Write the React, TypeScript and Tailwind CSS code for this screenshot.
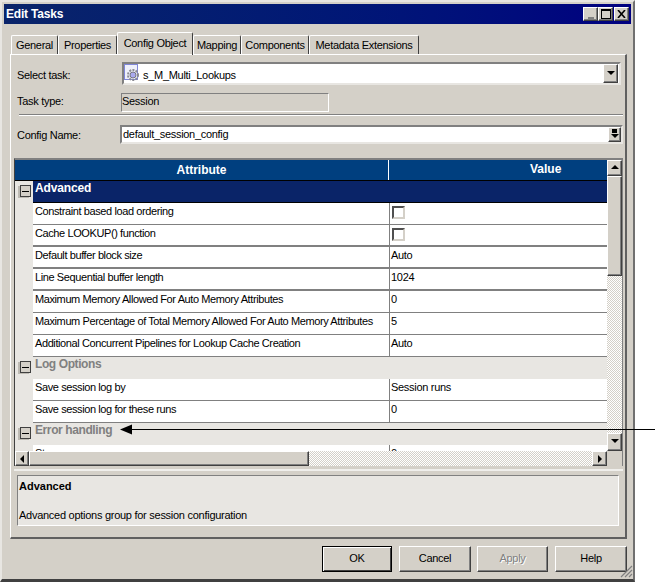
const raised = 'border border-t-white border-l-white border-r-[#404040] border-b-[#404040] bg-[#d4d0c8] shadow-[inset_-1px_-1px_0_#808080]';
const sunken = 'border-2 border-t-[#808080] border-l-[#808080] border-r-[#e8e6e2] border-b-[#e8e6e2] bg-white';
const dither = 'bg-[repeating-conic-gradient(#d4d0c8_0_25%,#ffffff_0_50%)] bg-[length:2px_2px]';

const tabs = [
  { label: 'General', w: 'w-[47px]' },
  { label: 'Properties', w: 'w-[59px]' },
  { label: 'Config Object', w: 'w-[76px]', active: true },
  { label: 'Mapping', w: 'w-[48px]' },
  { label: 'Components', w: 'w-[68px]' },
  { label: 'Metadata Extensions', w: 'w-[110px]' },
];

type Row =
  | { group: string; selected?: boolean }
  | { name: string; value?: string; check?: boolean; thick?: boolean };

const rows: Row[] = [
  { group: 'Advanced', selected: true },
  { name: 'Constraint based load ordering', check: true },
  { name: 'Cache LOOKUP() function', check: true, thick: true },
  { name: 'Default buffer block size', value: 'Auto', thick: true },
  { name: 'Line Sequential buffer length', value: '1024', thick: true },
  { name: 'Maximum Memory Allowed For Auto Memory Attributes', value: '0' },
  { name: 'Maximum Percentage of Total Memory Allowed For Auto Memory Attributes', value: '5' },
  { name: 'Additional Concurrent Pipelines for Lookup Cache Creation', value: 'Auto' },
  { group: 'Log Options' },
  { name: 'Save session log by', value: 'Session runs' },
  { name: 'Save session log for these runs', value: '0' },
  { group: 'Error handling' },
  { name: 'Stop on errors', value: '0' },
];

function Arrow({ dir }: { dir: 'up' | 'down' | 'left' | 'right' }) {
  const points = {
    up: '0,5 8,5 4,1',
    down: '0,1 8,1 4,5',
    left: '6,0 6,8 2,4',
    right: '2,0 2,8 6,4',
  }[dir];
  return (
    <svg width="8" height="8" viewBox="0 0 8 8" className="block">
      <polygon points={points} fill="#000" />
    </svg>
  );
}

function MinusBox() {
  return (
    <div className="h-[22px] w-[18px] shrink-0 bg-[#e8e6e2] pt-[4px] pl-[5px]">
      <div className="flex h-[12px] w-[11px] items-center justify-center border border-[#404040] bg-[#d4d0c8] shadow-[-2px_1px_0_#bdbab3]">
        <div className="h-px w-[7px] bg-black" />
      </div>
    </div>
  );
}

function GridRow({ row }: { row: Row }) {
  if ('group' in row) {
    return (
      <div className="flex h-[22px]">
        <MinusBox />
        <div
          className={
            row.selected
              ? 'flex-1 border-b border-black bg-[#0a2468] pl-[2px] text-[12px] leading-[14px] font-bold tracking-[-0.15px] text-white'
              : 'flex-1 bg-[#e8e6e2] pl-[2px] text-[12px] leading-[14px] font-bold tracking-[-0.4px] text-[#808080]'
          }
        >
          {row.group}
        </div>
      </div>
    );
  }
  return (
    <div className="flex h-[22px]">
      <div className="w-[18px] shrink-0 bg-[#e8e6e2]" />
      <div
        className={`flex flex-1 bg-white ${row.thick ? 'border-b-2 border-[#808080]' : 'border-b border-[#808080]'}`}
      >
        <div className="w-[356px] shrink-0 pl-[2px] leading-[16px] tracking-[-0.4px] whitespace-nowrap text-black">{row.name}</div>
        <div className="flex-1 border-l border-[#808080] pl-[1px] leading-[16px] tracking-[-0.3px] text-black">
          {row.check ? (
            <div className="mt-[3px] ml-[1px] h-[13px] w-[13px] border-2 border-t-[#505050] border-l-[#505050] border-r-[#d4d0c8] border-b-[#d4d0c8] bg-white" />
          ) : (
            row.value
          )}
        </div>
      </div>
    </div>
  );
}

function GearIcon() {
  return (
    <svg width="17" height="19" viewBox="0 0 17 19" className="shrink-0">
      <rect x="0.5" y="0.5" width="13" height="15" fill="#eef0fb" stroke="#7f86d8" />
      <g fill="none" stroke="#8a8a92">
        <circle cx="9" cy="11" r="5" strokeWidth="2" strokeDasharray="2 1.2" />
      </g>
      <circle cx="9" cy="11" r="3" fill="#a9a9ee" stroke="#77777f" />
    </svg>
  );
}

export default function App() {
  return (
    <div className="relative h-[582px] w-[655px] bg-white font-['Liberation_Sans',Arial,sans-serif] text-[11px] tracking-[-0.3px] text-black">
      <div className="flex h-[582px] w-[635px] flex-col border-t-2 border-r-2 border-b-[3px] border-l-2 border-t-[#e8e6e2] border-r-[#707070] border-b-[#404040] border-l-[#e8e6e2] bg-[#d4d0c8] px-[2px] pt-[2px]">
        {/* title bar */}
        <div className="flex h-[20px] items-center justify-between bg-linear-to-r from-[#0a246a] to-[#000080] pr-[2px] pl-[2px]">
          <span className="text-[12px] font-bold tracking-[-0.2px] text-white">Edit Tasks</span>
          <div className="flex">
            <div className={`${raised} flex h-[14px] w-[15px] items-end justify-center pb-[1px]`}>
              <div className="h-[2px] w-[6px] bg-[#808080]" />
            </div>
            <div className={`${raised} flex h-[14px] w-[15px] items-center justify-center`}>
              <div className="h-[10px] w-[10px] border border-t-2 border-black" />
            </div>
            <div className={`${raised} ml-[1px] flex h-[14px] w-[15px] items-center justify-center`}>
              <svg width="9" height="8" viewBox="0 0 9 8">
                <path d="M1 0 L8 8 M8 0 L1 8" stroke="#000" strokeWidth="1.6" />
              </svg>
            </div>
          </div>
        </div>

        {/* tabs */}
        <div className="mt-[8px] flex h-[22px] items-end pl-[7px]">
          {tabs.map((t) => (
            <div
              key={t.label}
              className={`${t.w} flex shrink-0 justify-center rounded-t-[2px] border-t border-r border-l border-t-white border-r-[#404040] border-l-white ${
                t.active ? 'relative z-10 -mb-px h-[23px] pt-[3px]' : 'h-[19px] pt-[2px]'
              }`}
            >
              <span className="leading-[15px] whitespace-nowrap">{t.label}</span>
            </div>
          ))}
        </div>

        {/* tab panel */}
        <div className="mr-[4px] ml-[6px] flex h-[485px] flex-col border-t border-r-2 border-b-2 border-l border-t-white border-r-[#606060] border-b-[#606060] border-l-white pt-[7px] pr-[2px] pl-[3px]">
          <div className="flex h-[23px] items-center pr-[2px] pl-[3px]">
            <span className="w-[105px] shrink-0 pt-[3px]">Select task:</span>
            <div className={`${sunken} flex h-[23px] flex-1 items-center justify-between pr-[1px]`}>
              <div className="flex items-center gap-[2px]">
                <GearIcon />
                <span className="pt-[3px] text-[11px]">s_M_Multi_Lookups</span>
              </div>
              <div className={`${raised} flex h-[19px] w-[15px] items-center justify-center`}>
                <Arrow dir="down" />
              </div>
            </div>
          </div>
          <div className="mt-[8px] flex h-[19px] items-center pl-[3px]">
            <span className="w-[104px] shrink-0 pb-[2px]">Task type:</span>
            <div className="flex h-[19px] w-[208px] items-center border border-t-[#808080] border-r-white border-b-white border-l-[#808080] pb-[2px]">
              Session
            </div>
          </div>
          <div className="mt-[2px] ml-[5px] h-[2px] border-t border-b border-t-[#808080] border-b-white" />
          <div className="mt-[9px] flex h-[19px] items-center pl-[3px]">
            <span className="w-[103px] shrink-0 pt-[2px]">Config Name:</span>
            <div className={`${sunken} flex h-[19px] flex-1 items-center justify-between pl-[1px]`}>
              <span className="pb-[1px]">default_session_config</span>
              <div className={`${raised} flex h-[15px] w-[13px] flex-col items-center`}>
                <div className="mt-[1px] h-[4px] w-[5px] bg-black" />
                <Arrow dir="down" />
              </div>
            </div>
          </div>

          {/* attribute grid */}
          <div className="mt-[14px] flex h-[308px] flex-col border-t-2 border-r border-l border-t-[#808080] border-r-[#808080] border-l-[#404040]">
            <div className="flex flex-1 overflow-hidden">
              <div className="flex min-w-0 flex-1 flex-col">
                <div className="flex h-[21px] shrink-0 border-b border-black bg-[#003f7f] text-[12px] font-bold tracking-normal text-white">
                  <div className="flex w-[374px] shrink-0 items-center justify-center border-r border-white pb-[1px]">Attribute</div>
                  <div className="flex-1 pl-[141px]">Value</div>
                </div>
                <div className="h-[270px] overflow-hidden">
                  {rows.map((r, i) => (
                    <GridRow key={i} row={r} />
                  ))}
                </div>
              </div>
              {/* vertical scrollbar */}
              <div className="flex w-[15px] shrink-0 flex-col">
                <div className={`${raised} flex h-[16px] items-center justify-center`}>
                  <Arrow dir="up" />
                </div>
                <div className={`${raised} h-[100px]`} />
                <div className={`${dither} flex-1`} />
                <div className={`${raised} flex h-[18px] items-center justify-center`}>
                  <Arrow dir="down" />
                </div>
              </div>
            </div>
            {/* horizontal scrollbar */}
            <div className="flex h-[15px] shrink-0">
              <div className={`${raised} flex w-[14px] items-center justify-center`}>
                <Arrow dir="left" />
              </div>
              <div className={`${raised} w-[280px]`} />
              <div className={`${dither} flex-1`} />
              <div className={`${raised} flex w-[15px] items-center justify-center`}>
                <Arrow dir="right" />
              </div>
              <div className="w-[15px]" />
            </div>
          </div>

          {/* description */}
          <div className="mt-[3px] h-[2px] bg-[#f0efec]" />
          <div className="mt-[4px] ml-[3px] h-[51px] w-[602px] border border-t-[#808080] border-r-white border-b-white border-l-[#808080] bg-[#e8e6e2] pt-[3px] pl-[1px]">
            <div className="text-[11px] leading-[14px] font-bold tracking-normal">Advanced</div>
            <div className="mt-[15px] leading-[14px] tracking-[-0.27px]">Advanced options group for session configuration</div>
          </div>
        </div>

        {/* buttons */}
        <div className="mt-[7px] flex justify-end gap-[6px] pr-[4px]">
          <div className="mr-[1px] flex h-[26px] w-[70px] items-center justify-center border border-black bg-[#d4d0c8] pb-[1px] shadow-[inset_1px_1px_0_#ffffff,inset_-1px_-1px_0_#404040]">OK</div>
          <div className={`${raised} flex h-[26px] w-[72px] items-center justify-center pb-[1px]`}>Cancel</div>
          <div className={`${raised} mr-[1px] flex h-[26px] w-[71px] items-center justify-center pb-[1px] text-[#808080] [text-shadow:1px_1px_0_#ffffff]`}>Apply</div>
          <div className={`${raised} flex h-[26px] w-[72px] items-center justify-center pb-[1px]`}>Help</div>
        </div>
      </div>

      {/* size grip */}
      <svg width="13" height="13" viewBox="0 0 13 13" className="absolute top-[565px] left-[620px]">
        <path d="M12 1 L1 12 M12 5 L5 12 M12 9 L9 12" stroke="#808080" strokeWidth="1.2" />
      </svg>

      {/* callout arrow */}
      <svg width="535" height="11" viewBox="0 0 535 11" className="absolute top-[424px] left-[120px]">
        <path d="M0 5.5 L12 0.5 L12 10.5 Z" fill="#000" />
        <path d="M12 5.5 H535" stroke="#000" strokeWidth="1" />
      </svg>
    </div>
  );
}
